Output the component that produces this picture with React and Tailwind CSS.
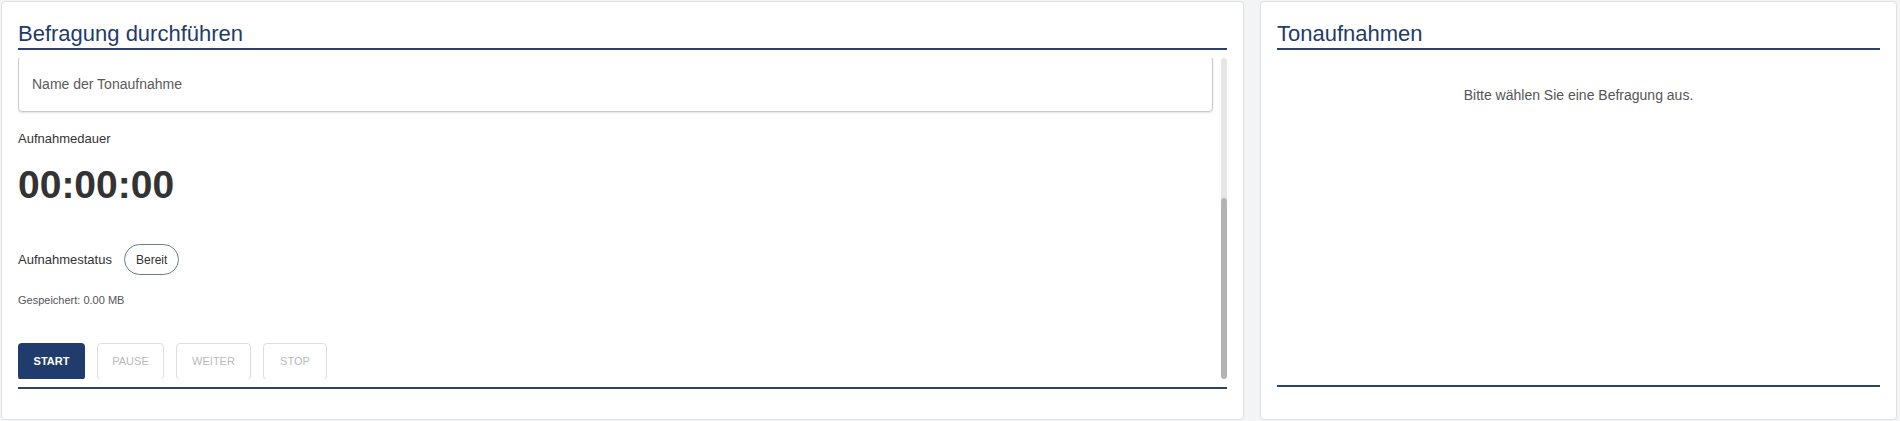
import React from 'react';

const Rule = () => <div className="h-[2px] bg-[#2c426c]" />;

const CardTitle = ({ children }) => (
    <>
        <h2 className="text-[22px] leading-[28px] text-[#1f3b6b] font-normal">{children}</h2>
        <Rule />
    </>
);

const RecorderButton = ({ label, width, primary }) => (
    <button
        className={
            primary
                ? `${width} h-[37px] rounded bg-[#203c6c] text-white text-[11px] font-bold`
                : `${width} h-[37px] rounded border border-[#dedede] bg-white text-[#b9b9b9] text-[11px]`
        }
    >
        {label}
    </button>
);

const App = () => {
    return (
        <div className="w-[1900px] h-[421px] bg-[#f3f4f6] pt-px pb-px pl-px pr-[3px] flex gap-4 font-['Liberation_Sans',Arial,sans-serif]">
            {/* Befragung */}
            <div className="w-[1243px] h-full bg-white border border-[#e0e0e0] rounded px-4 pt-[18px] flex flex-col">
                <CardTitle>Befragung durchführen</CardTitle>

                <div className="mt-2 h-[321px] flex">
                    <div className="flex-1 overflow-hidden pr-2">
                        <div className="-mt-[2px]">
                            <div className="h-[56px] rounded border border-[#c9c9c9] shadow-[0_1px_2px_rgba(0,0,0,0.12)] flex items-center px-[13px]">
                                <span className="text-[14px] text-[#5a5a5a]">Name der Tonaufnahme</span>
                            </div>

                            <div className="mt-[19px] text-[13px] leading-4 text-[#333]">Aufnahmedauer</div>
                            <div className="mt-[14px] text-[39px] leading-[48px] font-bold text-[#333]">00:00:00</div>

                            <div className="mt-[35px] flex items-center gap-3">
                                <span className="text-[13px] text-[#333]">Aufnahmestatus</span>
                                <span className="h-[31px] px-[11px] rounded-full border border-[#6a7898] flex items-center text-[12px] text-[#333]">
                                    Bereit
                                </span>
                            </div>

                            <div className="mt-[18px] text-[11px] leading-[14px] text-[#555]">Gespeichert: 0.00 MB</div>

                            <div className="mt-[36px] flex gap-3">
                                <RecorderButton label="START" width="w-[67px]" primary />
                                <RecorderButton label="PAUSE" width="w-[67px]" />
                                <RecorderButton label="WEITER" width="w-[75px]" />
                                <RecorderButton label="STOP" width="w-[64px]" />
                            </div>
                        </div>
                    </div>
                    {/* scrollbar */}
                    <div className="w-[6px] h-full bg-[#e6e6e6] rounded-full flex flex-col justify-end">
                        <div className="h-[181px] bg-[#b4b4b4] rounded-full" />
                    </div>
                </div>

                <div className="mt-2">
                    <Rule />
                </div>
            </div>

            {/* Tonaufnahmen */}
            <div className="flex-1 h-full bg-white border border-[#e0e0e0] rounded px-4 pt-[18px] flex flex-col">
                <CardTitle>Tonaufnahmen</CardTitle>
                <p className="mt-[35px] text-center text-[14px] leading-5 text-[#555]">Bitte wählen Sie eine Befragung aus.</p>
                <div className="flex-1" />
                <div className="mb-[32px]">
                    <Rule />
                </div>
            </div>
        </div>
    );
};

export default App;
